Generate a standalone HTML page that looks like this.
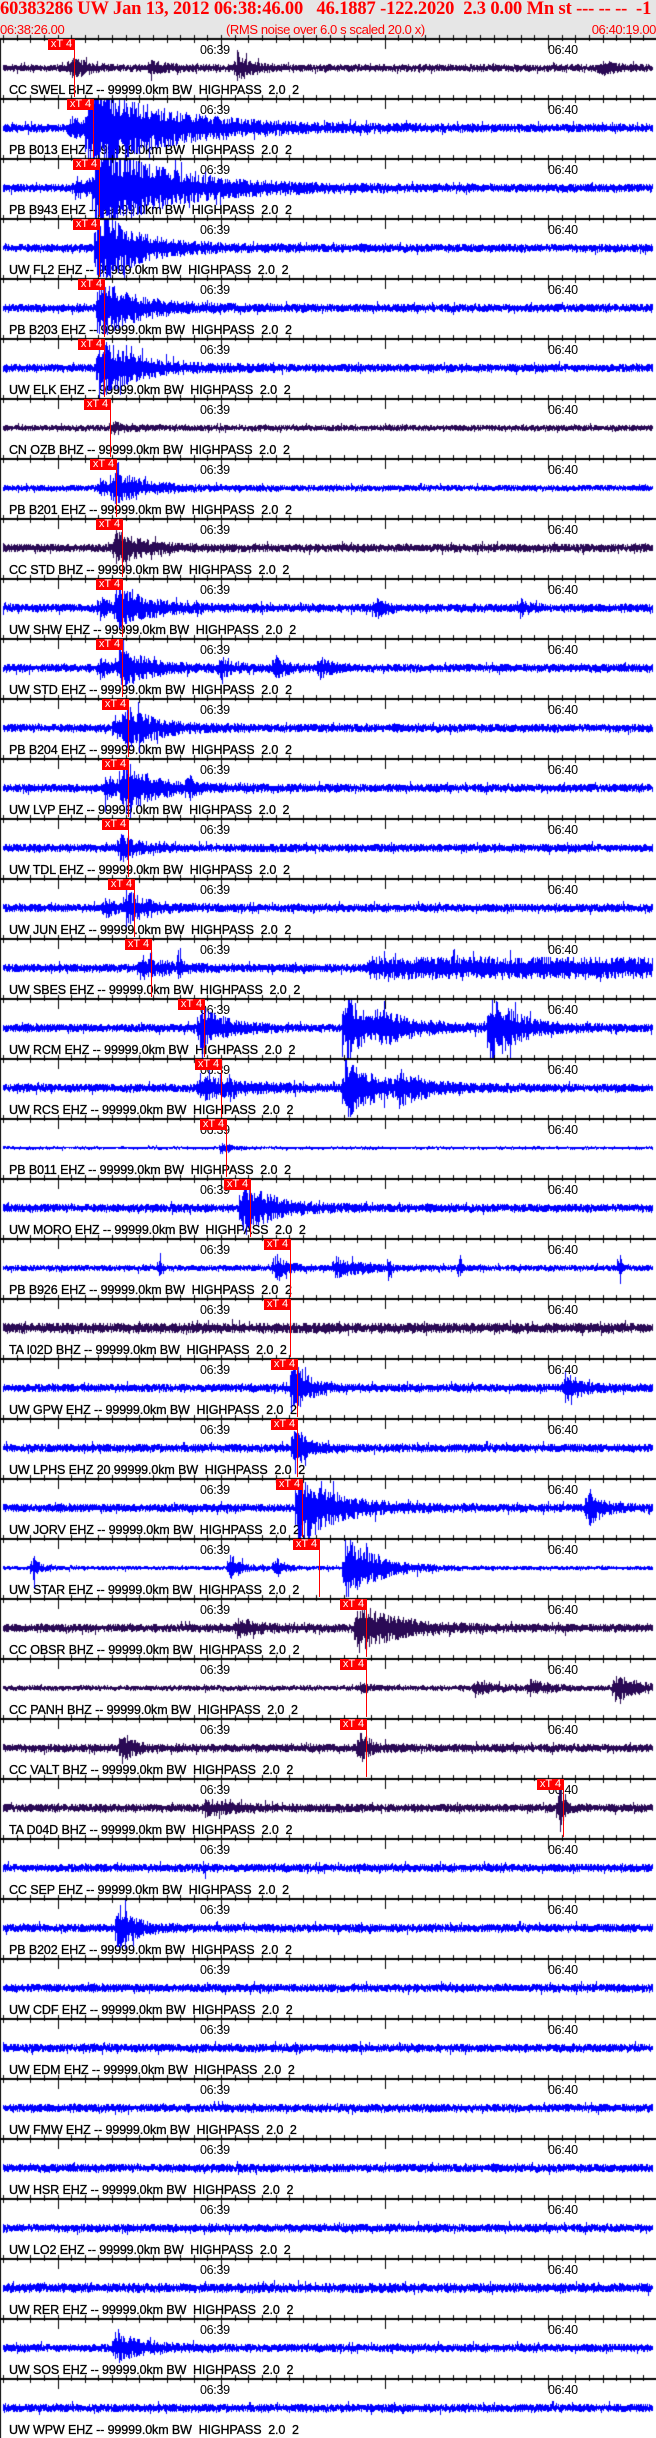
<!DOCTYPE html>
<html><head><meta charset="utf-8">
<style>
html,body{margin:0;padding:0;background:#fff;}
#w{position:relative;width:656px;height:2438px;overflow:hidden;background:#fff;font-family:"Liberation Sans",sans-serif;}
#hd{position:absolute;left:0;top:0;width:656px;height:38px;background:#e6e6e6;}
.h1{position:absolute;left:0;top:-1px;font:bold 18.5px "Liberation Serif",serif;color:#f00;white-space:pre;letter-spacing:-0.15px;}
.h2{position:absolute;top:22px;font:13px "Liberation Sans",sans-serif;color:#f00;white-space:pre;letter-spacing:-0.4px;}
.p{position:absolute;left:0;width:656px;height:60px;}
.t1,.t2{position:absolute;top:5px;font:12.5px "Liberation Sans",sans-serif;color:#000;letter-spacing:-0.3px;}
.t1{left:200px}.t2{left:548px}
.lb{position:absolute;left:9px;top:45px;font:12.5px "Liberation Sans",sans-serif;color:#000;white-space:pre;letter-spacing:-0.1px;-webkit-text-stroke:0.3px #000;}
canvas{position:absolute;left:0;top:0;}
.pk{position:absolute;width:27px;height:11px;background:#f00;color:#fff;font:11px "Liberation Sans",sans-serif;line-height:11px;text-align:center;z-index:3;}
.pl{position:absolute;width:1px;height:58px;background:#f00;z-index:3;}
</style></head><body>
<div id="w">
<div id="hd">
<div class="h1">60383286 UW Jan 13, 2012 06:38:46.00   46.1887 -122.2020  2.3 0.00 Mn st --- -- --  -1</div>
<div class="h2" style="left:0">06:38:26.00</div>
<div class="h2" style="left:226px">(RMS noise over 6.0 s scaled 20.0 x)</div>
<div class="h2" style="right:0">06:40:19.00</div>
</div>
<div class="p" style="top:38px"><div class="t1">06:39</div><div class="t2">06:40</div><div class="lb">CC SWEL BHZ -- 99999.0km BW  HIGHPASS  2.0  2</div></div>
<div class="p" style="top:98px"><div class="t1">06:39</div><div class="t2">06:40</div><div class="lb">PB B013 EHZ -- 99999.0km BW  HIGHPASS  2.0  2</div></div>
<div class="p" style="top:158px"><div class="t1">06:39</div><div class="t2">06:40</div><div class="lb">PB B943 EHZ -- 99999.0km BW  HIGHPASS  2.0  2</div></div>
<div class="p" style="top:218px"><div class="t1">06:39</div><div class="t2">06:40</div><div class="lb">UW FL2 EHZ -- 99999.0km BW  HIGHPASS  2.0  2</div></div>
<div class="p" style="top:278px"><div class="t1">06:39</div><div class="t2">06:40</div><div class="lb">PB B203 EHZ -- 99999.0km BW  HIGHPASS  2.0  2</div></div>
<div class="p" style="top:338px"><div class="t1">06:39</div><div class="t2">06:40</div><div class="lb">UW ELK EHZ -- 99999.0km BW  HIGHPASS  2.0  2</div></div>
<div class="p" style="top:398px"><div class="t1">06:39</div><div class="t2">06:40</div><div class="lb">CN OZB BHZ -- 99999.0km BW  HIGHPASS  2.0  2</div></div>
<div class="p" style="top:458px"><div class="t1">06:39</div><div class="t2">06:40</div><div class="lb">PB B201 EHZ -- 99999.0km BW  HIGHPASS  2.0  2</div></div>
<div class="p" style="top:518px"><div class="t1">06:39</div><div class="t2">06:40</div><div class="lb">CC STD BHZ -- 99999.0km BW  HIGHPASS  2.0  2</div></div>
<div class="p" style="top:578px"><div class="t1">06:39</div><div class="t2">06:40</div><div class="lb">UW SHW EHZ -- 99999.0km BW  HIGHPASS  2.0  2</div></div>
<div class="p" style="top:638px"><div class="t1">06:39</div><div class="t2">06:40</div><div class="lb">UW STD EHZ -- 99999.0km BW  HIGHPASS  2.0  2</div></div>
<div class="p" style="top:698px"><div class="t1">06:39</div><div class="t2">06:40</div><div class="lb">PB B204 EHZ -- 99999.0km BW  HIGHPASS  2.0  2</div></div>
<div class="p" style="top:758px"><div class="t1">06:39</div><div class="t2">06:40</div><div class="lb">UW LVP EHZ -- 99999.0km BW  HIGHPASS  2.0  2</div></div>
<div class="p" style="top:818px"><div class="t1">06:39</div><div class="t2">06:40</div><div class="lb">UW TDL EHZ -- 99999.0km BW  HIGHPASS  2.0  2</div></div>
<div class="p" style="top:878px"><div class="t1">06:39</div><div class="t2">06:40</div><div class="lb">UW JUN EHZ -- 99999.0km BW  HIGHPASS  2.0  2</div></div>
<div class="p" style="top:938px"><div class="t1">06:39</div><div class="t2">06:40</div><div class="lb">UW SBES EHZ -- 99999.0km BW  HIGHPASS  2.0  2</div></div>
<div class="p" style="top:998px"><div class="t1">06:39</div><div class="t2">06:40</div><div class="lb">UW RCM EHZ -- 99999.0km BW  HIGHPASS  2.0  2</div></div>
<div class="p" style="top:1058px"><div class="t1">06:39</div><div class="t2">06:40</div><div class="lb">UW RCS EHZ -- 99999.0km BW  HIGHPASS  2.0  2</div></div>
<div class="p" style="top:1118px"><div class="t1">06:39</div><div class="t2">06:40</div><div class="lb">PB B011 EHZ -- 99999.0km BW  HIGHPASS  2.0  2</div></div>
<div class="p" style="top:1178px"><div class="t1">06:39</div><div class="t2">06:40</div><div class="lb">UW MORO EHZ -- 99999.0km BW  HIGHPASS  2.0  2</div></div>
<div class="p" style="top:1238px"><div class="t1">06:39</div><div class="t2">06:40</div><div class="lb">PB B926 EHZ -- 99999.0km BW  HIGHPASS  2.0  2</div></div>
<div class="p" style="top:1298px"><div class="t1">06:39</div><div class="t2">06:40</div><div class="lb">TA I02D BHZ -- 99999.0km BW  HIGHPASS  2.0  2</div></div>
<div class="p" style="top:1358px"><div class="t1">06:39</div><div class="t2">06:40</div><div class="lb">UW GPW EHZ -- 99999.0km BW  HIGHPASS  2.0  2</div></div>
<div class="p" style="top:1418px"><div class="t1">06:39</div><div class="t2">06:40</div><div class="lb">UW LPHS EHZ 20 99999.0km BW  HIGHPASS  2.0  2</div></div>
<div class="p" style="top:1478px"><div class="t1">06:39</div><div class="t2">06:40</div><div class="lb">UW JORV EHZ -- 99999.0km BW  HIGHPASS  2.0  2</div></div>
<div class="p" style="top:1538px"><div class="t1">06:39</div><div class="t2">06:40</div><div class="lb">UW STAR EHZ -- 99999.0km BW  HIGHPASS  2.0  2</div></div>
<div class="p" style="top:1598px"><div class="t1">06:39</div><div class="t2">06:40</div><div class="lb">CC OBSR BHZ -- 99999.0km BW  HIGHPASS  2.0  2</div></div>
<div class="p" style="top:1658px"><div class="t1">06:39</div><div class="t2">06:40</div><div class="lb">CC PANH BHZ -- 99999.0km BW  HIGHPASS  2.0  2</div></div>
<div class="p" style="top:1718px"><div class="t1">06:39</div><div class="t2">06:40</div><div class="lb">CC VALT BHZ -- 99999.0km BW  HIGHPASS  2.0  2</div></div>
<div class="p" style="top:1778px"><div class="t1">06:39</div><div class="t2">06:40</div><div class="lb">TA D04D BHZ -- 99999.0km BW  HIGHPASS  2.0  2</div></div>
<div class="p" style="top:1838px"><div class="t1">06:39</div><div class="t2">06:40</div><div class="lb">CC SEP EHZ -- 99999.0km BW  HIGHPASS  2.0  2</div></div>
<div class="p" style="top:1898px"><div class="t1">06:39</div><div class="t2">06:40</div><div class="lb">PB B202 EHZ -- 99999.0km BW  HIGHPASS  2.0  2</div></div>
<div class="p" style="top:1958px"><div class="t1">06:39</div><div class="t2">06:40</div><div class="lb">UW CDF EHZ -- 99999.0km BW  HIGHPASS  2.0  2</div></div>
<div class="p" style="top:2018px"><div class="t1">06:39</div><div class="t2">06:40</div><div class="lb">UW EDM EHZ -- 99999.0km BW  HIGHPASS  2.0  2</div></div>
<div class="p" style="top:2078px"><div class="t1">06:39</div><div class="t2">06:40</div><div class="lb">UW FMW EHZ -- 99999.0km BW  HIGHPASS  2.0  2</div></div>
<div class="p" style="top:2138px"><div class="t1">06:39</div><div class="t2">06:40</div><div class="lb">UW HSR EHZ -- 99999.0km BW  HIGHPASS  2.0  2</div></div>
<div class="p" style="top:2198px"><div class="t1">06:39</div><div class="t2">06:40</div><div class="lb">UW LO2 EHZ -- 99999.0km BW  HIGHPASS  2.0  2</div></div>
<div class="p" style="top:2258px"><div class="t1">06:39</div><div class="t2">06:40</div><div class="lb">UW RER EHZ -- 99999.0km BW  HIGHPASS  2.0  2</div></div>
<div class="p" style="top:2318px"><div class="t1">06:39</div><div class="t2">06:40</div><div class="lb">UW SOS EHZ -- 99999.0km BW  HIGHPASS  2.0  2</div></div>
<div class="p" style="top:2378px"><div class="t1">06:39</div><div class="t2">06:40</div><div class="lb">UW WPW EHZ -- 99999.0km BW  HIGHPASS  2.0  2</div></div>

<div class="pk" style="left:48px;top:39px">xT 4</div><div class="pl" style="left:74px;top:39px"></div>
<div class="pk" style="left:67px;top:99px">xT 4</div><div class="pl" style="left:93px;top:99px"></div>
<div class="pk" style="left:73px;top:159px">xT 4</div><div class="pl" style="left:99px;top:159px"></div>
<div class="pk" style="left:73px;top:219px">xT 4</div><div class="pl" style="left:99px;top:219px"></div>
<div class="pk" style="left:78px;top:279px">xT 4</div><div class="pl" style="left:104px;top:279px"></div>
<div class="pk" style="left:78px;top:339px">xT 4</div><div class="pl" style="left:104px;top:339px"></div>
<div class="pk" style="left:84px;top:399px">xT 4</div><div class="pl" style="left:110px;top:399px"></div>
<div class="pk" style="left:90px;top:459px">xT 4</div><div class="pl" style="left:116px;top:459px"></div>
<div class="pk" style="left:96px;top:519px">xT 4</div><div class="pl" style="left:122px;top:519px"></div>
<div class="pk" style="left:96px;top:579px">xT 4</div><div class="pl" style="left:122px;top:579px"></div>
<div class="pk" style="left:96px;top:639px">xT 4</div><div class="pl" style="left:122px;top:639px"></div>
<div class="pk" style="left:102px;top:699px">xT 4</div><div class="pl" style="left:128px;top:699px"></div>
<div class="pk" style="left:102px;top:759px">xT 4</div><div class="pl" style="left:128px;top:759px"></div>
<div class="pk" style="left:102px;top:819px">xT 4</div><div class="pl" style="left:128px;top:819px"></div>
<div class="pk" style="left:108px;top:879px">xT 4</div><div class="pl" style="left:134px;top:879px"></div>
<div class="pk" style="left:125px;top:939px">xT 4</div><div class="pl" style="left:151px;top:939px"></div>
<div class="pk" style="left:178px;top:999px">xT 4</div><div class="pl" style="left:204px;top:999px"></div>
<div class="pk" style="left:195px;top:1059px">xT 4</div><div class="pl" style="left:221px;top:1059px"></div>
<div class="pk" style="left:200px;top:1119px">xT 4</div><div class="pl" style="left:226px;top:1119px"></div>
<div class="pk" style="left:224px;top:1179px">xT 4</div><div class="pl" style="left:250px;top:1179px"></div>
<div class="pk" style="left:264px;top:1239px">xT 4</div><div class="pl" style="left:290px;top:1239px"></div>
<div class="pk" style="left:264px;top:1299px">xT 4</div><div class="pl" style="left:290px;top:1299px"></div>
<div class="pk" style="left:271px;top:1359px">xT 4</div><div class="pl" style="left:297px;top:1359px"></div>
<div class="pk" style="left:271px;top:1419px">xT 4</div><div class="pl" style="left:297px;top:1419px"></div>
<div class="pk" style="left:276px;top:1479px">xT 4</div><div class="pl" style="left:302px;top:1479px"></div>
<div class="pk" style="left:293px;top:1539px">xT 4</div><div class="pl" style="left:319px;top:1539px"></div>
<div class="pk" style="left:340px;top:1599px">xT 4</div><div class="pl" style="left:366px;top:1599px"></div>
<div class="pk" style="left:340px;top:1659px">xT 4</div><div class="pl" style="left:366px;top:1659px"></div>
<div class="pk" style="left:340px;top:1719px">xT 4</div><div class="pl" style="left:366px;top:1719px"></div>
<div class="pk" style="left:537px;top:1779px">xT 4</div><div class="pl" style="left:563px;top:1779px"></div>

<canvas id="c" width="656" height="2438"></canvas>
</div>
<script>
(function(){
var c=document.getElementById('c').getContext('2d');
var s=12345;function r(){s=(s*1103515245+12345)&0x7fffffff;return s/0x7fffffff;}
var D='#2a0a55',B='#0000ff';
var P=[
[D,3.5,[[70,9,15],[150,4,20],[237,13,12],[600,5,15]]],
[B,4,[[70,8,20],[88,40,75]]],
[B,4,[[75,8,20],[95,40,70]]],
[B,4,[[97,32,40]]],
[B,4,[[99,26,35]]],
[B,4,[[99,26,35]]],
[D,3,[[110,4,20]]],
[B,3,[[100,8,10],[113,14,30]]],
[D,4,[[115,14,25]]],
[B,4,[[100,8,10],[117,18,30],[375,10,8],[520,6,8]]],
[B,4,[[100,8,10],[120,15,30],[220,8,10],[275,9,10],[320,8,10]]],
[B,4,[[115,8,8],[125,17,30]]],
[B,4,[[105,10,10],[122,22,30],[188,8,6]]],
[B,4,[[120,12,15]]],
[B,4,[[105,8,8],[126,14,20]]],
[B,4,[[140,9,25],[180,15,2],[370,7,2000]]],
[B,4,[[200,18,25],[345,32,20],[380,10,40],[490,30,25]]],
[B,4,[[200,10,40],[345,26,30],[400,10,30]]],
[B,1.5,[[222,5,10]]],
[B,4,[[242,22,30]]],
[B,3,[[275,10,12],[335,8,25],[160,12,1],[390,14,1],[460,14,1],[620,14,1]]],
[D,5,[]],
[B,4,[[293,30,12],[565,12,15]]],
[B,4,[[294,22,10]]],
[B,4,[[298,34,35],[588,16,12]]],
[B,2,[[33,12,6],[230,12,10],[275,10,8],[345,30,30]]],
[D,4,[[237,7,20],[357,20,40]]],
[D,2.5,[[360,4,10],[475,6,20],[530,6,20],[615,12,25]]],
[D,4,[[122,14,10],[360,12,10]]],
[D,4,[[205,5,30],[559,22,5]]],
[B,4,[[205,6,2]]],
[B,4,[[118,20,15]]],
[B,4,[]],[B,4,[]],[B,4,[]],[B,4,[]],[B,4,[]],[B,4.5,[]],
[B,4,[[115,12,25]]],
[B,4,[]]
];
for(var i=0;i<40;i++){
var top=38+60*i,cy=top+30,p=P[i];
c.fillStyle='#000';
c.fillRect(0,top,656,2);
c.fillRect(0,top,1,60);
for(var k=-16;k<=32;k++){var x=Math.round(221+k*13.625);if(x<1||x>655)continue;
 var big=(k%12===0);c.fillRect(x,top-3,1,big?14:(k%2===0?8:6));}
c.fillStyle=p[0];
for(var x=3;x<653;x++){
 var e=p[1];
 for(var j=0;j<p[2].length;j++){var ev=p[2][j],d=x-ev[0];
  if(d>=-3&&d<0)e+=ev[1]*0.4;else if(d>=0)e+=ev[1]*Math.exp(-d/ev[2]);}
 var a1=e*(0.35+0.75*r()),a2=e*(0.35+0.75*r());
 if(r()<0.04){a1*=1.6;}if(r()<0.04){a2*=1.6;}
 var y1=Math.max(top+2,cy-a1),y2=Math.min(top+60,cy+a2);
 c.fillRect(x,Math.round(y1),1,Math.max(1,Math.round(y2-y1)));
}
}
})();
</script>
</body></html>
